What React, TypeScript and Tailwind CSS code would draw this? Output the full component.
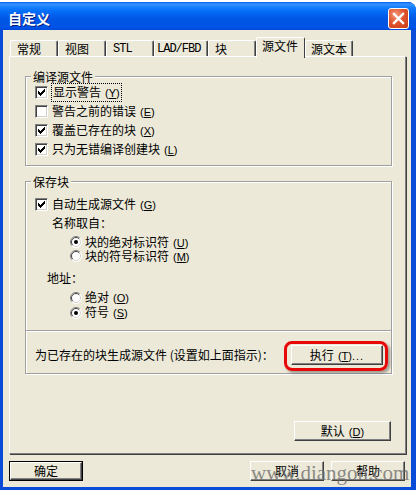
import React from "react";

function Mn({ ch }: { ch: string }) {
  return (
    <span className="font-['Liberation_Sans',sans-serif] text-[11px] ml-[4px]">
      (<span className="underline">{ch}</span>)
    </span>
  );
}

const CHECK_PIXELS: [number, number][] = [
  [6, 0],
  [5, 1], [6, 1],
  [0, 2], [4, 2], [5, 2], [6, 2],
  [0, 3], [1, 3], [3, 3], [4, 3], [5, 3],
  [0, 4], [1, 4], [2, 4], [3, 4], [4, 4],
  [1, 5], [2, 5], [3, 5],
  [2, 6],
];

function Check({ checked }: { checked: boolean }) {
  return (
    <span className="relative block w-[13px] h-[13px] shrink-0 bg-white border border-t-[#808080] border-l-[#808080] border-r-white border-b-white shadow-[inset_1px_1px_0_#404040,inset_-1px_-1px_0_#D4D0C8]">
      {checked && (
        <svg className="absolute left-[2px] top-[2px]" width="7" height="7" viewBox="0 0 7 7" shapeRendering="crispEdges">
          {CHECK_PIXELS.map(([x, y]) => (
            <rect key={`${x}-${y}`} x={x} y={y} width="1" height="1" fill="#000" />
          ))}
        </svg>
      )}
    </span>
  );
}

function Radio({ checked }: { checked: boolean }) {
  return (
    <svg width="12" height="12" viewBox="0 0 12 12" className="shrink-0 block">
      <circle cx="6" cy="6" r="5.5" fill="#fff" />
      <path d="M2.1 9.9 A5.5 5.5 0 0 1 9.9 2.1" stroke="#808080" strokeWidth="1" fill="none" />
      <path d="M2.8 9.2 A4.5 4.5 0 0 1 9.2 2.8" stroke="#404040" strokeWidth="1" fill="none" />
      <path d="M9.9 2.1 A5.5 5.5 0 0 1 2.1 9.9" stroke="#ffffff" strokeWidth="1" fill="none" />
      <path d="M9.2 2.8 A4.5 4.5 0 0 1 2.8 9.2" stroke="#D4D0C8" strokeWidth="1" fill="none" />
      {checked && <circle cx="6" cy="6" r="2" fill="#000" />}
    </svg>
  );
}

function Btn({ children, w, isDefault }: { children: React.ReactNode; w: string; isDefault?: boolean }) {
  const inner = (
    <div className="h-full w-full flex items-center justify-center bg-[#ECE9D8] border border-t-white border-l-white border-r-[#404040] border-b-[#404040] shadow-[inset_-1px_-1px_0_#808080]">
      {children}
    </div>
  );
  if (isDefault) {
    return <div className={`${w} h-[20px] border border-black`}>{inner}</div>;
  }
  return <div className={`${w} h-[20px]`}>{inner}</div>;
}

function Tab({ label, w, pl, mono, active }: { label: string; w: string; pl: string; mono?: boolean; active?: boolean }) {
  const text = mono ? (
    <span className="font-['Liberation_Mono',monospace] text-[12px] tracking-[-1px]">{label}</span>
  ) : (
    <span>{label}</span>
  );
  if (active) {
    return (
      <div className={`${w} h-[21px] -mb-[2px] relative z-10 bg-[#ECE9D8] border-t border-l border-white border-r border-r-[#404040] rounded-t-[2px] flex items-start pt-[2px] ${pl}`}>
        {text}
      </div>
    );
  }
  return (
    <div className={`${w} h-[16px] bg-[#ECE9D8] border-t border-l border-white border-r border-r-[#404040] shadow-[inset_-1px_0_0_#808080] rounded-t-[2px] flex items-center ${pl}`}>
      {text}
    </div>
  );
}

function Group({ title, h, children }: { title: string; h: string; children: React.ReactNode }) {
  return (
    <div className={`relative w-[367px] ${h} border border-[#A0A0A0] shadow-[1px_1px_0_#fff,inset_1px_1px_0_#fff] flex flex-col`}>
      <div className="absolute -top-[7px] left-[5px] px-[2px] bg-[#ECE9D8] leading-[13px]">{title}</div>
      {children}
    </div>
  );
}

export default function App() {
  return (
    <div className="w-[416px] h-[490px] bg-white overflow-hidden relative font-['Noto_Sans_CJK_SC','Noto_Sans',sans-serif] text-[12px] text-black leading-none">
      <div className="mt-[2px] h-[488px] w-[416px] flex flex-col rounded-tr-[8px] overflow-hidden bg-[#0A4BD8]">
        {/* title bar */}
        <div className="h-[28px] shrink-0 flex items-center justify-between pl-[8px] pr-[7px] bg-[linear-gradient(to_bottom,#0058EE_0%,#3A93FF_7%,#2A8BFF_12%,#127DFF_20%,#0570F8_32%,#0262EE_45%,#0057E5_60%,#0054E3_80%,#0055EB_90%,#0048D4_100%)]">
          <span className="text-white font-bold text-[14px] pt-[4px] [text-shadow:1px_1px_0_#0A1E80]">自定义</span>
          <div className="w-[21px] h-[21px] mt-[4px] rounded-[3px] border border-white bg-[radial-gradient(circle_at_35%_30%,#F29A7A_0%,#E0552F_45%,#C63A14_100%)] flex items-center justify-center">
            <svg width="13" height="13" viewBox="0 0 13 13">
              <path d="M2 2 L11 11 M11 2 L2 11" stroke="#fff" strokeWidth="2.4" strokeLinecap="square" />
            </svg>
          </div>
        </div>
        {/* body */}
        <div className="flex-1 ml-[3px] mr-[5px] mb-[3px] bg-[#ECE9D8] pl-[6px] pr-[5px] pt-[7px] pb-[6px] flex flex-col">
          {/* tabs */}
          <div className="h-[19px] flex items-end pl-[1px]">
            <Tab label="常规" w="w-[48px]" pl="pl-[6px]" />
            <Tab label="视图" w="w-[48px]" pl="pl-[6px]" />
            <Tab label="STL" w="w-[48px]" pl="pl-[6px]" mono />
            <Tab label="LAD/FBD" w="w-[54px]" pl="pl-[2px]" mono />
            <Tab label="块" w="w-[48px]" pl="pl-[6px]" />
            <Tab label="源文件" w="w-[49px]" pl="pl-[5px]" active />
            <Tab label="源文本" w="w-[48px]" pl="pl-[5px]" />
          </div>
          {/* panel */}
          <div className="h-[398px] w-[397px] border border-t-white border-l-white border-r-[#808080] border-b-[#808080] shadow-[1px_1px_0_#404040] pl-[15px] pt-[19px] flex flex-col">
            <Group title="编译源文件" h="h-[90px]">
              <div className="pt-[6px] pl-[9px] flex flex-col">
                <div className="h-[19px] flex items-center gap-[3px]">
                  <Check checked />
                  <span className="border border-dotted border-black px-[1px] py-[1px] leading-[13px]">
                    显示警告<Mn ch="Y" />
                  </span>
                </div>
                <div className="h-[19px] flex items-center gap-[4px]">
                  <Check checked={false} />
                  <span>警告之前的错误<Mn ch="E" /></span>
                </div>
                <div className="h-[19px] flex items-center gap-[4px]">
                  <Check checked />
                  <span>覆盖已存在的块<Mn ch="X" /></span>
                </div>
                <div className="h-[19px] flex items-center gap-[4px]">
                  <Check checked />
                  <span>只为无错编译创建块<Mn ch="L" /></span>
                </div>
              </div>
            </Group>
            <div className="mt-[15px]">
              <Group title="保存块" h="h-[193px]">
                <div className="pt-[13px] flex flex-col">
                  <div className="h-[18px] pl-[9px] flex items-center gap-[4px]">
                    <Check checked />
                    <span>自动生成源文件<Mn ch="G" /></span>
                  </div>
                  <div className="h-[19px] pl-[26px] flex items-center">名称取自：</div>
                  <div className="mt-[3px] h-[14px] pl-[44px] flex items-center gap-[3px] leading-[12px]">
                    <Radio checked />
                    <span>块的绝对标识符<Mn ch="U" /></span>
                  </div>
                  <div className="h-[14px] pl-[44px] flex items-center gap-[3px] leading-[12px]">
                    <Radio checked={false} />
                    <span>块的符号标识符<Mn ch="M" /></span>
                  </div>
                  <div className="mt-[6px] h-[18px] pl-[21px] flex items-center">地址：</div>
                  <div className="mt-[3px] h-[15px] pl-[44px] flex items-center gap-[3px]">
                    <Radio checked={false} />
                    <span>绝对<Mn ch="O" /></span>
                  </div>
                  <div className="h-[15px] pl-[44px] flex items-center gap-[3px]">
                    <Radio checked />
                    <span>符号<Mn ch="S" /></span>
                  </div>
                  <div className="mt-[10px] h-[2px] border-t border-[#A0A0A0] border-b border-b-white" />
                  <div className="pt-[13px] pl-[9px] pr-[8px] flex items-center justify-between">
                    <span>为已存在的块生成源文件 (设置如上面指示)：</span>
                    <div className="relative">
                      <div className="absolute -left-[7px] -right-[5px] -top-[4px] -bottom-[6px] rounded-[8px] border-[3px] border-[#E80808] shadow-[2px_2px_3px_rgba(0,0,0,0.35)]" />
                      <Btn w="w-[92px]">
                        <span>执行<Mn ch="T" /><span className="font-['Liberation_Sans',sans-serif] text-[11px] tracking-[1px]">...</span></span>
                      </Btn>
                    </div>
                  </div>
                </div>
              </Group>
            </div>
            <div className="mt-[47px] w-[367px] flex justify-end pr-[1px]">
              <Btn w="w-[97px]">
                <span>默认<Mn ch="D" /></span>
              </Btn>
            </div>
          </div>
          {/* bottom buttons */}
          <div className="mt-[7px] flex items-center pr-[1px]">
            <Btn w="w-[74px]" isDefault>
              <span>确定</span>
            </Btn>
            <div className="ml-auto flex gap-[7px]">
              <Btn w="w-[74px]">
                <span>取消</span>
              </Btn>
              <Btn w="w-[74px]">
                <span>帮助</span>
              </Btn>
            </div>
          </div>
        </div>
      </div>
      <div className="absolute left-[251px] top-[463px] font-['Liberation_Serif',serif] text-[21px] leading-[21px] text-[#6f6f6f]/80 pointer-events-none whitespace-nowrap">
        www.diangon.com
      </div>
    </div>
  );
}
